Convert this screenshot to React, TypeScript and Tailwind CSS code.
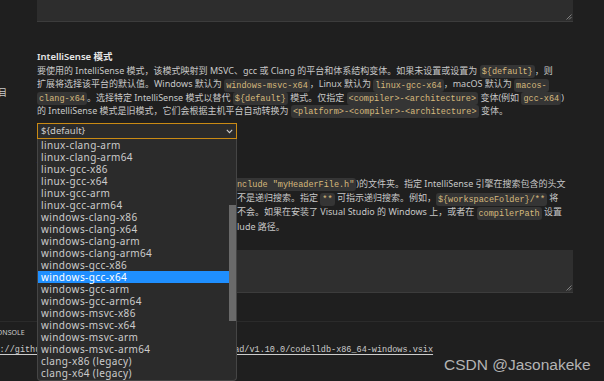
import type { ReactNode } from 'react'
import clsx from 'clsx'

const ui = "font-['Noto_Sans','Noto_Sans_CJK_SC',sans-serif]"
const mono = "font-['Liberation_Mono','DejaVu_Sans_Mono',monospace]"

const modes = [
  'linux-clang-arm',
  'linux-clang-arm64',
  'linux-gcc-x86',
  'linux-gcc-x64',
  'linux-gcc-arm',
  'linux-gcc-arm64',
  'windows-clang-x86',
  'windows-clang-x64',
  'windows-clang-arm',
  'windows-clang-arm64',
  'windows-gcc-x86',
  'windows-gcc-x64',
  'windows-gcc-arm',
  'windows-gcc-arm64',
  'windows-msvc-x86',
  'windows-msvc-x64',
  'windows-msvc-arm',
  'windows-msvc-arm64',
  'clang-x86 (legacy)',
  'clang-x64 (legacy)',
]

function Code({ children, className }: { children: ReactNode; className?: string }) {
  return (
    <code
      className={clsx(
        'rounded-[3px] bg-[#353535] px-[2px] py-[1.5px] text-[8.5px] leading-none text-[#d7ba7d]',
        mono,
        className,
      )}
    >
      {children}
    </code>
  )
}

// line whose first 200px sit under the open dropdown
function CoveredLine({ lead, children }: { lead: ReactNode; children: ReactNode }) {
  return (
    <div className="flex h-[14.4px] items-center whitespace-nowrap">
      <span className="flex w-[200px] shrink-0 justify-end overflow-hidden">
        <span className="whitespace-nowrap">{lead}</span>
      </span>
      <span>{children}</span>
    </div>
  )
}

function ResizeGrip() {
  return (
    <svg width="6" height="6" viewBox="0 0 6 6" className="absolute bottom-[1px] right-[1px]">
      <path d="M5.5 0.5 L0.5 5.5 M5.5 3 L3 5.5" stroke="#8a8a8a" strokeWidth="0.9" />
    </svg>
  )
}

function Chevron() {
  return (
    <svg width="7" height="5" viewBox="0 0 7 5" className="ml-auto mr-[3px]">
      <path d="M0.8 0.8 L3.5 3.6 L6.2 0.8" fill="none" stroke="#cccccc" strokeWidth="1.1" />
    </svg>
  )
}

function ModeSelect() {
  return (
    <div className="relative mt-[6px] w-[200px]">
      <div className="flex h-[16px] items-center border border-[#c98a14] bg-[#2b2b2b] pl-[3px] text-[9.5px] text-[#cccccc]">
        <span>{'${default}'}</span>
        <Chevron />
      </div>
      <div className="absolute left-0 top-[16px] z-10 h-[242px] w-[200px] overflow-hidden rounded-b-[4px] border border-t-0 border-[#454545] bg-[#2b2b2b]">
        <ul className="mr-[7px]">
          {modes.map((m) => (
            <li
              key={m}
              className={clsx(
                'h-[12px] pl-[3px] text-[10px] leading-[12px] tracking-[0.4px] whitespace-nowrap',
                m === 'windows-gcc-x64' ? 'bg-[#1f8fff] text-white' : 'text-[#cccccc]',
              )}
            >
              {m}
            </li>
          ))}
        </ul>
        <div className="absolute right-0 top-[66px] h-[116px] w-[7px] bg-[#6a6a6a]" />
      </div>
    </div>
  )
}

export default function App() {
  return (
    <div className={clsx('h-[381px] w-[604px] overflow-hidden bg-[#1f1f1f] text-[#cccccc]', ui)}>
      <div className="flex h-[321px]">
        <aside className="w-[37px] shrink-0 overflow-hidden">
          <div className="mt-[86px] -ml-[11px] whitespace-nowrap text-[9px] leading-[14px] text-[#cccccc]">
            项目
          </div>
        </aside>

        <main className="w-[536px]">
          <div className="relative h-[22px] border-b border-[#3c3c3c] bg-[#2d2d2d]">
            <ResizeGrip />
          </div>

          <section className="mt-[28px]">
            <h3 className="text-[9.5px] font-semibold leading-[13px] text-[#e7e7e7]">IntelliSense 模式</h3>
            <div className="mt-[1px] text-[9px] text-[#c8c8c8]">
              <div className="flex h-[13.3px] items-center whitespace-nowrap">
                <span>
                  要使用的 IntelliSense 模式，该模式映射到 MSVC、gcc 或 Clang 的平台和体系结构变体。如果未设置或设置为{' '}
                  <Code>{'${default}'}</Code>，则
                </span>
              </div>
              <div className="flex h-[13.3px] items-center whitespace-nowrap">
                <span>
                  扩展将选择该平台的默认值。Windows 默认为 <Code>windows-msvc-x64</Code>，Linux 默认为{' '}
                  <Code>linux-gcc-x64</Code>，macOS 默认为 <Code>macos-</Code>
                </span>
              </div>
              <div className="flex h-[13.3px] items-center whitespace-nowrap">
                <span>
                  <Code>clang-x64</Code>。选择特定 IntelliSense 模式以替代 <Code>{'${default}'}</Code> 模式。仅指定{' '}
                  <Code>{'<compiler>-<architecture>'}</Code> 变体(例如 <Code>gcc-x64</Code>)
                </span>
              </div>
              <div className="flex h-[13.3px] items-center whitespace-nowrap">
                <span>
                  的 IntelliSense 模式是旧模式，它们会根据主机平台自动转换为{' '}
                  <Code>{'<platform>-<compiler>-<architecture>'}</Code> 变体。
                </span>
              </div>
            </div>
            <ModeSelect />
          </section>

          <section className="mt-[18px]">
            <h3 className="text-[9.5px] font-semibold leading-[13px] text-[#e7e7e7]">包含路径</h3>
            <div className="mt-[6px] text-[9px] text-[#c8c8c8]">
              <CoveredLine lead={<>在搜索包含的头文件(例如 <Code className="rounded-r-none pr-0">#i</Code></>}>
                <Code className="rounded-l-none pl-0">nclude "myHeaderFile.h"</Code>)的文件夹。指定 IntelliSense
                引擎在搜索包含的头文
              </CoveredLine>
              <CoveredLine lead="件时要使用的路径列表。对这些路径进行的搜索">
                不是递归搜索。指定 <Code>**</Code> 可指示递归搜索。例如，<Code>{'${workspaceFolder}/**'}</Code> 将
              </CoveredLine>
              <CoveredLine lead="搜索所有子目录，而 ${workspaceFolder} ">
                不会。如果在安装了 Visual Studio 的 Windows 上，或者在 <Code>compilerPath</Code> 设置
              </CoveredLine>
              <CoveredLine lead="中指定了编译器，则无需在此列表中列出系统 inc">lude 路径。</CoveredLine>
            </div>
            <div className="relative mt-[16px] h-[43px] border-b border-[#3c3c3c] bg-[#2f2f2f]">
              <ResizeGrip />
            </div>
          </section>
        </main>
      </div>

      <footer className="relative h-[60px] border-t border-[#2b2b2b]">
        <div className="flex pt-[6px] text-[7px] leading-[10px] text-[#cccccc] whitespace-nowrap">
          <span className="-ml-[33px]">DEBUG CONSOLE</span>
        </div>
        <div
          className={clsx(
            'mt-[7px] -ml-[26px] whitespace-nowrap text-[8.5px] leading-[10px] text-[#cccccc] underline underline-offset-2',
            mono,
          )}
        >
          https://github.com/vadimcn/codelldb/releases/download/v1.10.0/codelldb-x86_64-windows.vsix
        </div>
        <div className="absolute bottom-[7px] left-[444px] font-['Liberation_Sans',Arial,sans-serif] text-[15.5px] leading-[18px] text-[#b4b4b4]">
          CSDN @Jasonakeke
        </div>
      </footer>
    </div>
  )
}
